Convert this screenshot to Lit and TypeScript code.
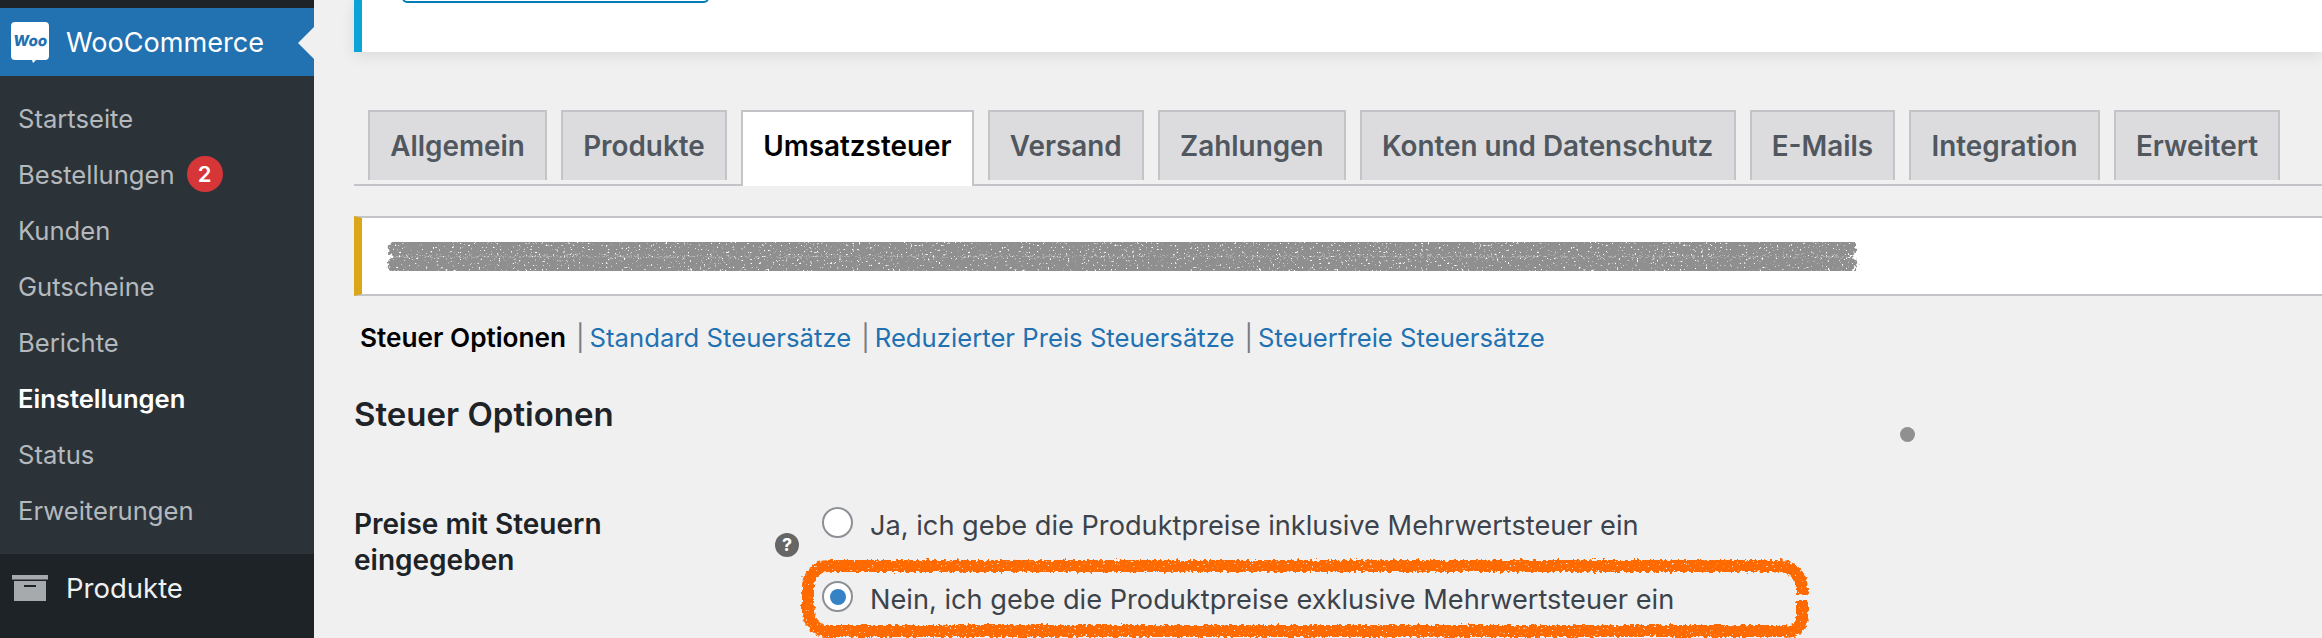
import { LitElement, html, css, svg } from "lit";
import { customElement } from "lit/decorators.js";

const SUB = ["Startseite", "Bestellungen", "Kunden", "Gutscheine", "Berichte", "Einstellungen", "Status", "Erweiterungen"];
const TABS = ["Allgemein", "Produkte", "Umsatzsteuer", "Versand", "Zahlungen", "Konten und Datenschutz", "E-Mails", "Integration", "Erweitert"];
const LINKS = ["Standard Steuersätze", "Reduzierter Preis Steuersätze", "Steuerfreie Steuersätze"];

const rough = (id: string, scale: number, seed: number, holes: string) => svg`
  <filter id=${id} x="-5%" y="-30%" width="110%" height="160%">
    <feTurbulence type="fractalNoise" baseFrequency="0.3" numOctaves="2" seed=${seed} result="n"/>
    <feDisplacementMap in="SourceGraphic" in2="n" scale=${scale} xChannelSelector="R" yChannelSelector="G" result="d"/>
    <feTurbulence type="fractalNoise" baseFrequency="0.45" numOctaves="2" seed=${seed + 3}/>
    <feColorMatrix type="matrix" values="0 0 0 0 0  0 0 0 0 0  0 0 0 0 0  ${holes}" result="h"/>
    <feComposite in="d" in2="h" operator="in"/>
  </filter>`;

@customElement("app-root")
export class AppRoot extends LitElement {
  static styles = css`
    :host { display: block; width: 2322px; height: 638px; overflow: hidden; background: #f0f0f1; font-family: Inter, "Liberation Sans", sans-serif; }
    .page { display: grid; grid-template-columns: 314px 1fr; height: 638px; position: relative; }
    .side { background: #1d2327; padding-top: 8px; display: flex; flex-direction: column; }
    .active { height: 68px; background: #2271b1; color: #fff; display: flex; align-items: center; position: relative; font-size: 27.1px; }
    .active::after { content: ""; position: absolute; right: 0; top: 19px; border: 16px solid transparent; border-right-color: #f0f0f1; border-left-width: 0; }
    .ico { width: 66px; flex: none; display: flex; justify-content: center; padding-right: 6px; box-sizing: border-box; }
    .sub { background: #2c3338; padding: 14px 0 16px 18px; }
    .sub div { height: 56px; display: flex; align-items: center; gap: 12px; font-size: 25.6px; color: #b4b9be; }
    .sub div.on { color: #fff; font-weight: 600; }
    .badge { width: 36px; height: 36px; border-radius: 50%; background: #d63638; color: #fff; font-size: 22px; font-weight: 600; display: flex; align-items: center; justify-content: center; }
    .prod { height: 68px; display: flex; align-items: center; color: #f0f0f1; font-size: 27.5px; }
    .main { padding-left: 40px; min-width: 0; }
    .panel { height: 52px; box-sizing: border-box; background: #fff; border-left: 8px solid #0ca3d8; box-shadow: 0 4px 14px rgba(0,0,0,.09); padding: 0 0 49px 40px; display: flex; align-items: flex-end; overflow: hidden; }
    .btn { flex: none; width: 307px; height: 40px; box-sizing: border-box; border: 2px solid #007cba; border-radius: 5px; }
    .tabs { margin-top: 58px; padding: 0 0 4px 14px; border-bottom: 2px solid #c3c4c7; display: flex; gap: 14px; align-items: flex-start; }
    .tab { height: 70px; box-sizing: border-box; padding: 0 20.2px; border: 2px solid #c3c4c7; border-bottom: 0; background: #dcdcde; color: #50575e; font-size: 27.85px; font-weight: 600; display: flex; align-items: center; white-space: nowrap; }
    .tab.on { height: 76px; margin-bottom: -6px; background: #fff; color: #000; border-bottom: 0; padding-bottom: 6px; }
    .notice { margin-top: 30px; height: 80px; box-sizing: border-box; background: #fff; border: solid #c3c4c7; border-width: 2px 0; border-left: 8px solid #dba617; padding: 18px 0 0 24px; }
    .notice svg { display: block; }
    .links { margin: 26px 0 0 6px; height: 30px; display: flex; align-items: center; font-size: 25.7px; white-space: nowrap; }
    .links b { font-size: 26.2px; font-weight: 600; color: #000; }
    .links a { color: #2271b1; }
    .links i { font-style: normal; color: #787c82; margin: 0 5px 0 10px; }
    h2 { margin: 42px 0 0; height: 40px; line-height: 41px; font-size: 33px; font-weight: 600; color: #1d2327; }
    .form { margin-top: 69px; display: grid; grid-template-columns: 421px 24px 1fr; column-gap: 0; }
    .lab { margin-top: 3px; font-size: 28px; font-weight: 600; line-height: 36px; color: #1d2327; }
    .help { margin-top: 30px; width: 24px; height: 24px; border-radius: 50%; background: #666; color: #fff; font: 700 18px/24px Inter, sans-serif; text-align: center; }
    .opts { padding-left: 23px; display: grid; row-gap: 34px; }
    .opt { height: 40px; display: flex; align-items: center; gap: 17px; font-size: 27.2px; color: #3c434a; white-space: nowrap; }
    .opt em { font-style: normal; padding-top: 5px; }
    .radio { width: 31px; height: 31px; box-sizing: border-box; flex: none; border: 2px solid #8c8f94; border-radius: 50%; background: #fff; display: flex; align-items: center; justify-content: center; margin-top: -1px; }
    .radio span { width: 16px; height: 16px; border-radius: 50%; background: #3582c4; }
    .mark { position: absolute; left: 790px; top: 550px; }
    .dot { position: absolute; left: 1900px; top: 427px; width: 15px; height: 15px; border-radius: 50%; background: #909090; }
  `;

  render() {
    return html`<div class="page">
      <aside class="side">
        <div class="active">
          <span class="ico">
            <svg width="38" height="41" viewBox="0 0 38 41">
              <path d="M4 0h30a4 4 0 0 1 4 4v30a4 4 0 0 1-4 4h-9l-3 3-1-3H4a4 4 0 0 1-4-4V4a4 4 0 0 1 4-4z" fill="#fff"/>
              <text x="19" y="24" text-anchor="middle" font-family="Inter, sans-serif" font-size="15" font-weight="800" transform="skewX(-8) translate(3 0)" fill="#2271b1">Woo</text>
            </svg>
          </span>
          WooCommerce
        </div>
        <div class="sub">
          ${SUB.map((s) => html`<div class=${s === "Einstellungen" ? "on" : ""}>${s}${s === "Bestellungen" ? html`<span class="badge">2</span>` : ""}</div>`)}
        </div>
        <div class="prod">
          <span class="ico">
            <svg width="36" height="26" viewBox="0 0 36 26" fill="#a7aaad">
              <rect width="36" height="4.5"/>
              <path d="M2 6h32v20H2z M12 10v2h12v-2z" fill-rule="evenodd"/>
            </svg>
          </span>
          Produkte
        </div>
      </aside>
      <main class="main">
        <div class="panel"><div class="btn"></div></div>
        <nav class="tabs">
          ${TABS.map((t) => html`<div class="tab ${t === "Umsatzsteuer" ? "on" : ""}">${t}</div>`)}
        </nav>
        <div class="notice">
          <svg width="1480" height="42" viewBox="0 0 1480 42">
            <defs>${rough("sc", 8, 4, "0 0 0 -8 6.3")}</defs>
            <g filter="url(#sc)" fill="none" stroke="#8f8f8f" stroke-width="17" stroke-linecap="round">
              <path d="M10 12H1462"/>
              <path d="M10 29H1462"/>
            </g>
          </svg>
        </div>
        <div class="links">
          <b>Steuer Optionen</b>
          ${LINKS.map((l) => html`<i>|</i><a>${l}</a>`)}
        </div>
        <h2>Steuer Optionen</h2>
        <div class="form">
          <div class="lab">Preise mit Steuern<br />eingegeben</div>
          <div class="help">?</div>
          <div class="opts">
            <label class="opt"><span class="radio"></span><em>Ja, ich gebe die Produktpreise inklusive Mehrwertsteuer ein</em></label>
            <label class="opt"><span class="radio"><span></span></span><em>Nein, ich gebe die Produktpreise exklusive Mehrwertsteuer ein</em></label>
          </div>
        </div>
      </main>
      <svg class="mark" width="1030" height="100" viewBox="0 0 1030 100">
        <defs>${rough("or", 6, 9, "0 0 0 -8 6.6")}</defs>
        <path d="M1012 50V68A14 14 0 0 1 994 81H38A20 20 0 0 1 18 61V36A20 20 0 0 1 38 16H990A22 22 0 0 1 1012 38V45" fill="none" stroke="#ff6a00" stroke-width="12" filter="url(#or)"/>
      </svg>
      <div class="dot"></div>
    </div>`;
  }
}
